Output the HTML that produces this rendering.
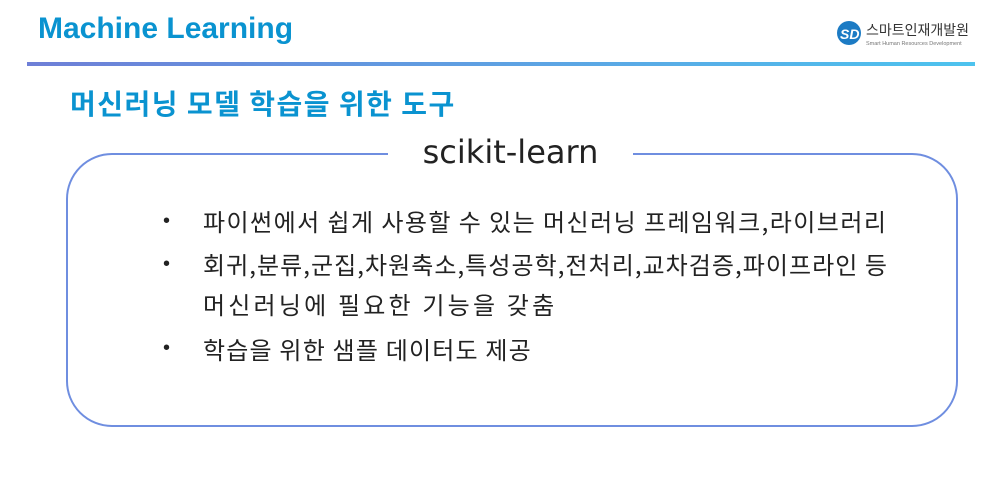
<!DOCTYPE html>
<html><head><meta charset="utf-8"><style>
body{margin:0;width:1000px;height:500px;background:#fff;position:relative;overflow:hidden;font-family:"Liberation Sans","Noto Sans CJK KR",sans-serif}
.t{position:absolute;left:38px;top:12px;font-size:30px;font-weight:bold;color:#0a93d0}
.bar{position:absolute;left:27px;top:62px;width:948px;height:4px;background:linear-gradient(90deg,#6e7fd7,#4dc3ee)}
.h{position:absolute;left:70px;top:83px;font-size:28px;letter-spacing:1.5px;font-weight:bold;color:#0a93d0;font-family:"Noto Sans CJK KR",sans-serif}
.box{position:absolute;left:66px;top:153px;width:888px;height:270px;border:2px solid #6f8ee0;border-radius:46px}
.gap{position:absolute;left:388px;top:148px;width:245px;height:12px;background:#fff}
.st{position:absolute;left:388px;top:133px;width:245px;text-align:center;font-size:32px;color:#222;font-family:"DejaVu Sans",sans-serif}
.li{position:absolute;left:203px;font-size:24px;letter-spacing:1.2px;color:#222;font-family:"Noto Sans CJK KR",sans-serif;font-weight:400}
.b{position:absolute;left:163px;font-size:20px;color:#222}
.logo{position:absolute;left:836px;top:20px}
</style></head><body>
<div class="t">Machine Learning</div>
<div class="logo"><svg width="140" height="30"><circle cx="13" cy="13" r="12" fill="#1c7bc4"/><text x="4" y="19" font-size="14" font-weight="bold" fill="#fff" font-style="italic" font-family="Liberation Sans">SD</text><text x="30" y="15" font-size="14" fill="#333" font-family="Noto Sans CJK KR">스마트인재개발원</text><text x="30" y="25" font-size="5.5" fill="#777" font-family="Liberation Sans">Smart Human Resources Development</text></svg></div>
<div class="bar"></div>
<div class="h">머신러닝 모델 학습을 위한 도구</div>
<div class="box"></div>
<div class="gap"></div>
<div class="st">scikit-learn</div>
<div class="b" style="top:210px">•</div><div class="li" style="top:203px;letter-spacing:1.45px">파이썬에서 쉽게 사용할 수 있는 머신러닝 프레임워크,라이브러리</div>
<div class="b" style="top:253px">•</div><div class="li" style="top:246px;letter-spacing:1.05px">회귀,분류,군집,차원축소,특성공학,전처리,교차검증,파이프라인 등</div>
<div class="li" style="top:286px;letter-spacing:3.2px">머신러닝에 필요한 기능을 갖춤</div>
<div class="b" style="top:337px">•</div><div class="li" style="top:331px">학습을 위한 샘플 데이터도 제공</div>
</body></html>
